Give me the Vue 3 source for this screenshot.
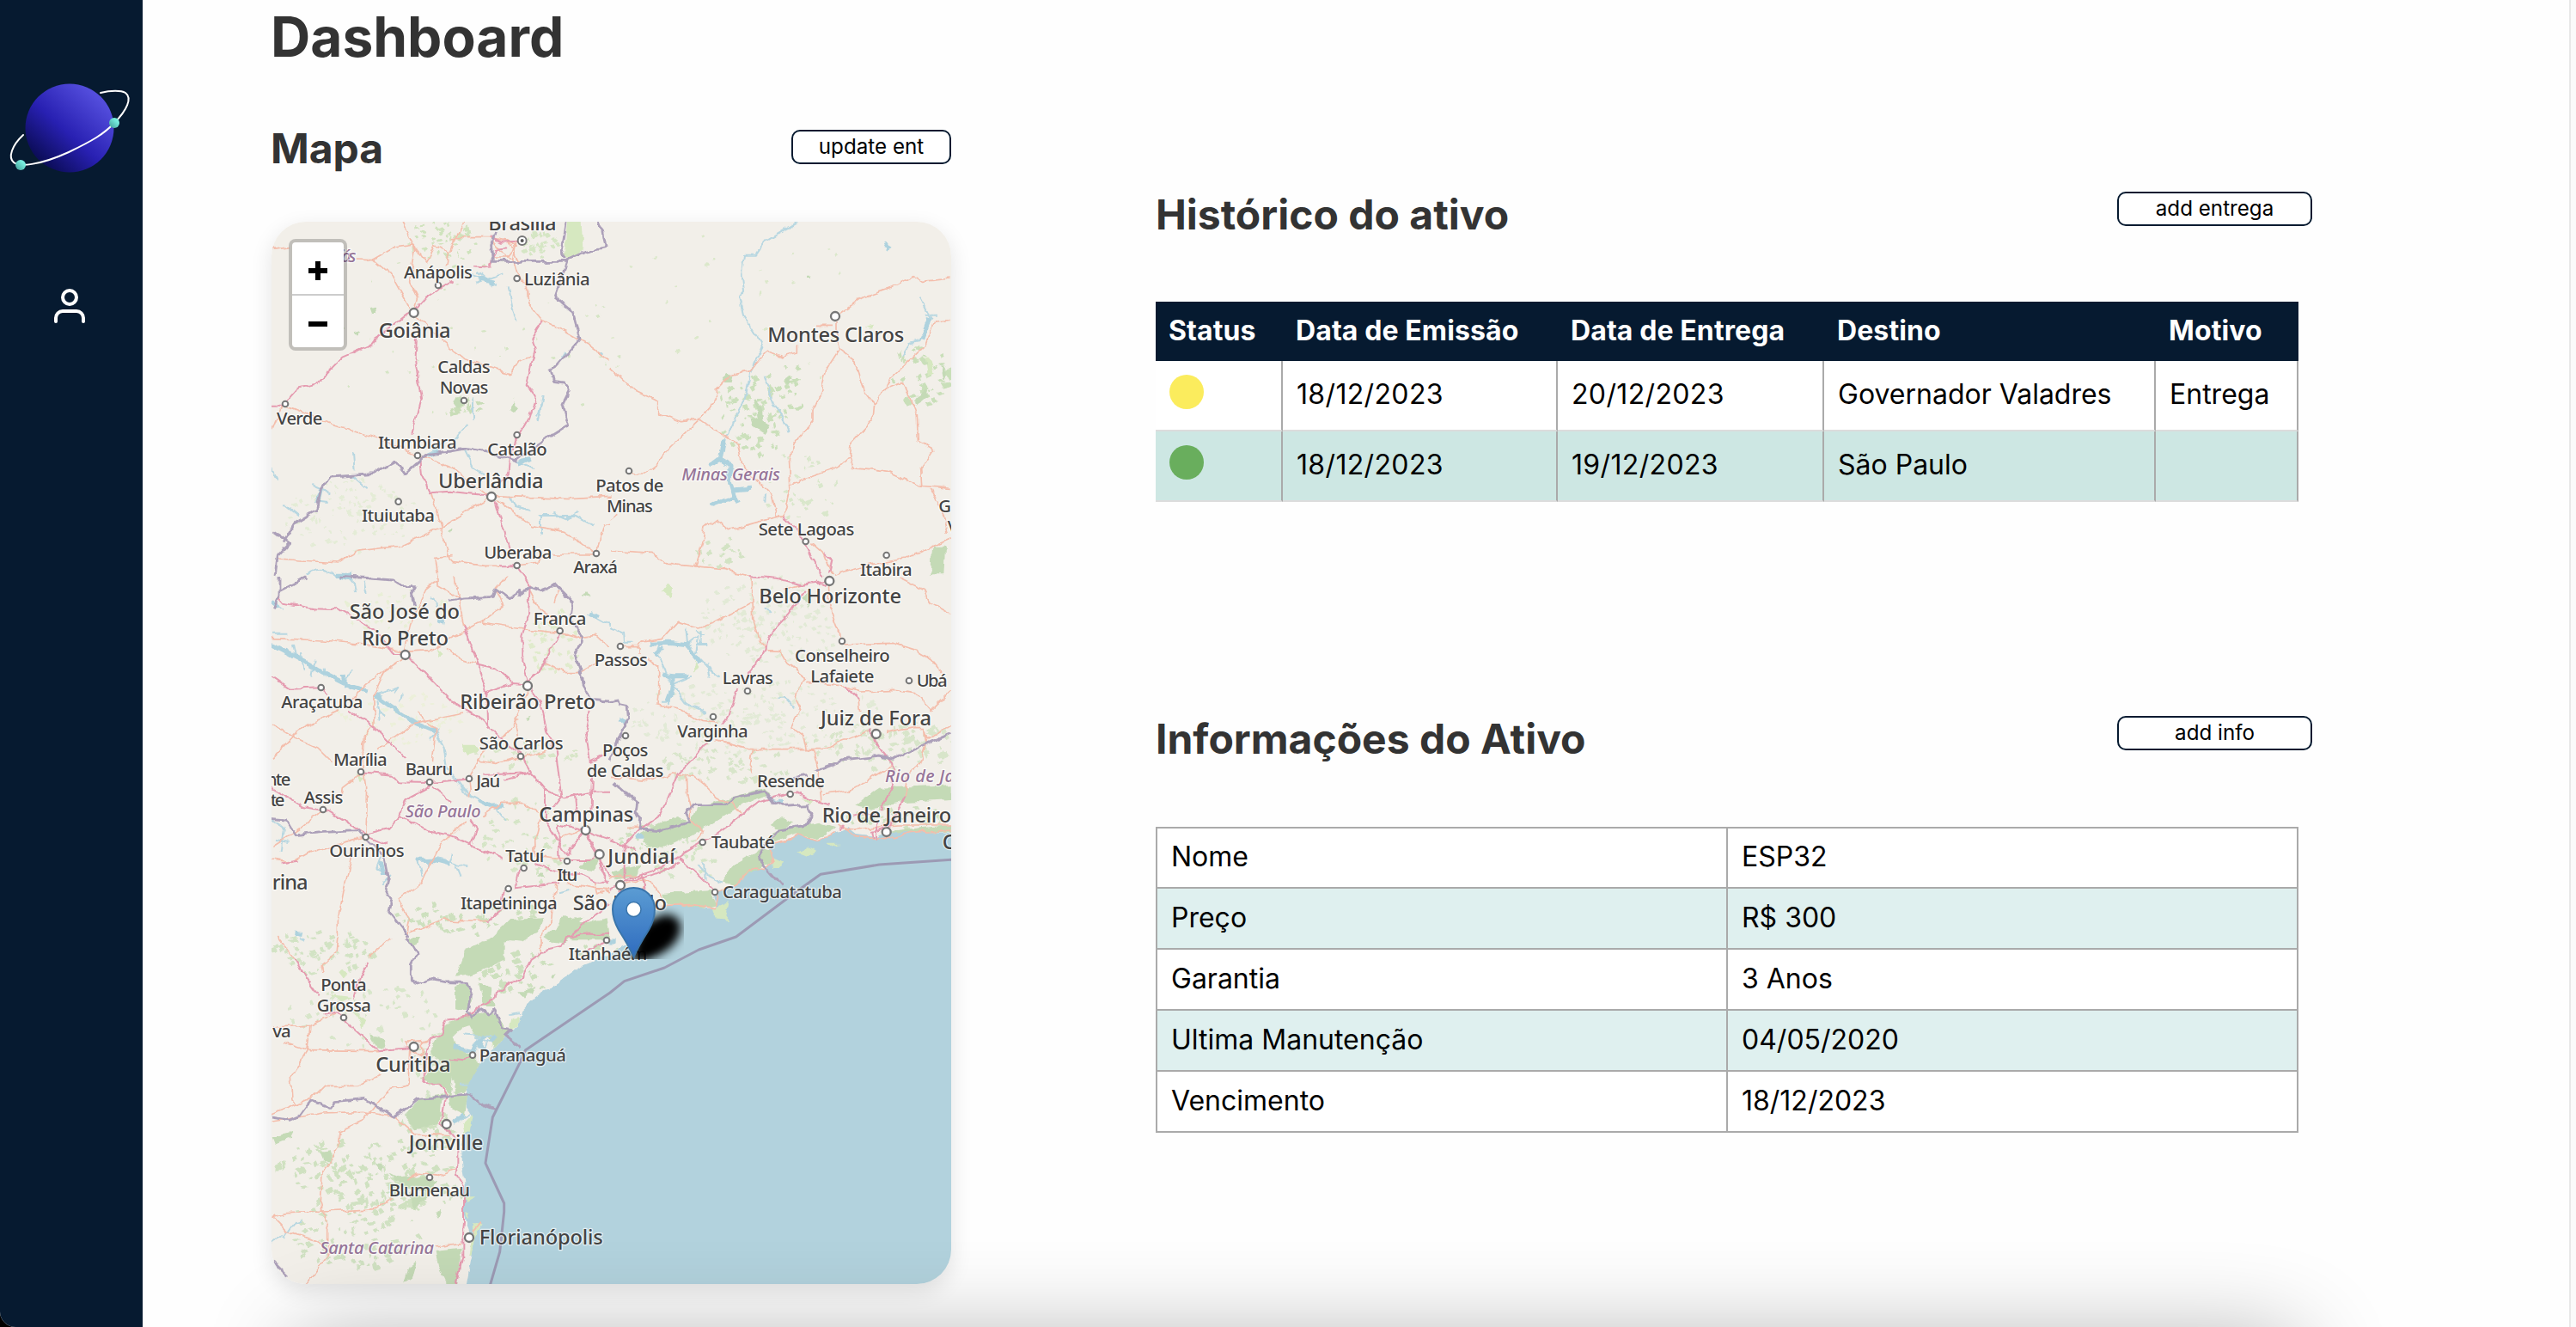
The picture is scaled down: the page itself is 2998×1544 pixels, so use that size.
<script setup>
const deliveries = [
  { status: 'pending', issued: '18/12/2023', due: '20/12/2023', target: 'Governador Valadres', reason: 'Entrega' },
  { status: 'done', issued: '18/12/2023', due: '19/12/2023', target: 'São Paulo', reason: '' },
]

const info = [
  ['Nome', 'ESP32'],
  ['Preço', 'R$ 300'],
  ['Garantia', '3 Anos'],
  ['Ultima Manutenção', '04/05/2020'],
  ['Vencimento', '18/12/2023'],
]

// Each map tile keeps its own local coordinates.
// cities: [x, y, radius]; labels: [text, x, baseline, length, kind]
const tiles = [
  {
    x: 0, y: 0,
    park: 'M1050 20H1100L1105 115L1080 150L1040 150Z',
    forest: 'M655 655L665 635L690 665L672 678ZM850 680L868 658L885 680L865 690ZM365 325L380 320L385 345L372 345ZM305 412L328 405L315 422ZM630 1105L650 1100L645 1115Z',
    river: 'M845 250L860 330L875 370M720 210L810 240M730 240L820 205M740 200L790 245M965 630L950 720M958 660L945 700M720 640L720 710M700 735L660 780L560 830M300 830L305 895M160 945L220 970M170 1000L215 1005M300 910L350 955M870 860L930 885M690 820L720 880L760 905M850 980L870 1020L920 1035M950 1050L1080 1050L1145 1085M960 1050V1115M1000 1040L1050 1060L1090 1030M18 880L40 925M60 1010L110 1050M140 1258Q190 1220 240 1255L300 1250M1020 520L1045 480M1160 480H1175',
    lake: 'M560 838L600 822M880 868L920 850M740 225L800 235M190 960L180 1000M240 1255H300',
    trunk: 'M470 20L520 120L500 230L530 290L520 330M18 118L80 110M320 153L370 155L430 205L500 330M370 155L440 115L515 105L560 165L590 110L635 130L625 180M700 20L655 90L640 130M650 80L780 80L870 95L860 150L875 200L910 250L915 310L965 370L1050 410L1120 450L1200 510M520 345L600 430L690 500L850 555L880 510L925 495M66 665L200 720L390 780L520 835L640 875L780 985M575 970L610 1090L633 1190L650 1210L760 1225L820 1225M780 985L610 1090L470 1155L310 1175L250 1215L40 1200M800 980L900 985L1060 992L1200 985M805 995L930 1085L1040 1105L1150 1180M650 1190L590 1195L600 1260M1000 1185H1150L1180 1080L1200 1075M18 760L55 665M790 90L840 150L870 110L845 90L880 160M790 150H860M875 1224L950 1215L960 1190',
    motorway: 'M66 655L110 605L175 590L265 497L370 452L390 425L490 350L515 340L560 285L650 230M720 178L780 182L800 120L845 115M780 75L820 95L880 92M525 430L520 510L543 640L508 770M18 668L60 668M965 370L928 430L938 470L908 595L938 635L915 710L870 790L848 860L845 900L800 960M535 850L540 905L570 970L640 965L780 980M800 1000L848 1160M815 1225L875 1225L900 1260',
    border: 'M18 1100L80 1145L40 1190L30 1260M60 1145L100 1075L175 1030L190 960L225 915L370 905L450 862L480 905L560 835L640 825L700 815L770 828L870 860L950 800L1055 735L1035 660L1060 610L1040 585L1000 580L990 540L1010 530L1095 435L1070 340L1010 290L1055 155L1110 130L1185 115L1175 55L1150 20M1045 155L1030 120L1045 20M1050 163H790L785 100L800 60',
    cities: [[600, 246, 11], [875, 222, 11], [515, 342, 16], [66, 660, 11], [690, 648, 11], [875, 768, 11], [528, 840, 11], [786, 984, 16], [461, 1001, 11], [1152, 1182, 11], [875, 1224, 11]],
    labels: [['Brasília', 775, 52, 238, 'big'], ['iás', 255, 165, 58, 'state'], ['Anápolis', 480, 220, 240], ['Luziânia', 900, 244, 230], ['Goiânia', 392, 428, 252, 'big'], ['Caldas', 598, 551, 184], ['Novas', 605, 624, 170], ['Verde', 36, 731, 160], ['Itumbiara', 390, 815, 275], ['Catalão', 772, 840, 208], ['Uberlândia', 600, 953, 368, 'big'], ['Ituiutaba', 333, 1070, 255], ['Uberaba', 760, 1200, 237], ['Araxá', 1072, 1250, 155], ['Patos de', 1150, 964, 237], ['Minas', 1188, 1037, 162]],
  },
  {
    x: 1200, y: 0,
    forest: 'M388 575L405 552L430 560L425 585L400 585ZM505 640L530 670L535 720L560 735L540 765L500 740L490 710L515 705ZM615 570L635 560L630 590L618 590ZM1125 1160H1170L1165 1258H1120ZM1155 520L1175 550L1165 575ZM1065 650L1100 600L1105 635L1070 665ZM690 215H705V222H690Z',
    park: 'M1100 500L1115 500L1130 550L1110 565ZM890 385L915 380L910 395Z',
    river: 'M655 25L540 95L510 140H468L460 200L468 270L450 290L465 350L535 460L490 550L470 650L440 700L415 770L390 800M350 1015L440 985M1085 290L1120 360L1080 440L1045 450L1020 490M1100 350L1140 350M540 560L570 660L600 700L620 760M540 975L538 1010',
    lake: 'M400 785L385 850L345 880M430 960L495 955M385 855L420 875L418 930L430 970L448 1010M430 985L350 1015M1085 440L1115 360M960 98L970 115',
    trunk: 'M1190 222L1090 232L1060 212L980 255L880 290L800 345M795 370V450L800 470L755 540L735 620L708 680V720L640 800L628 850L632 940L605 1050M800 470L855 510L890 620L920 660L960 610L1020 585L1050 640L1072 700L1075 790L1130 820L1085 890L1088 945M920 660L915 720L840 800L835 840L850 880L970 895L1080 945L1190 955M840 840L800 880L630 940M1190 370L1130 375L1100 460L1040 515L980 570L955 615M720 385H780M655 450V480L600 495L550 472L490 545L420 560L370 610V650L310 715L210 810L170 865L125 900L60 900M0 535L85 615L170 655V690L250 722L310 712L380 760L445 800L465 880L565 980L580 1050H605L560 1060L415 1100L370 1060L330 1090L325 1140L298 1230M0 1170L140 1180L210 1220L400 1235L485 1258M1118 955L1165 1050L1180 1110M1190 1130L1030 1200L860 1230L780 1258M700 1145L750 1190L775 1255M0 1065L25 1045',
    motorway: 'M605 1050L650 1095L680 1150L740 1260M750 1185L775 1205L765 1250',
    border: '',
    cities: [[786, 354, 16], [66, 894, 11], [683, 1140, 11], [965, 1188, 11]],
    labels: [['Montes Claros', 550, 442, 477, 'big'], ['Minas Gerais', 250, 926, 344, 'state'], ['Sete Lagoas', 518, 1119, 335], ['Itabira', 873, 1258, 182], ['Governador', 1147, 1037, 330], ['Valadares', 1178, 1108, 270]],
  },
  {
    x: 0, y: 1260,
    forest: 'M800 1270L860 1240L900 1210L965 1195L950 1240L890 1280ZM985 1270L1040 1185L1100 1215L1190 1195L1200 1270ZM1090 1020L1125 985L1160 990L1150 1030L1110 1025ZM1100 65L1120 58L1130 75ZM945 1045L960 1035L975 1055ZM900 495L920 488L910 505Z',
    park: 'M680 590L730 590L745 610L700 625ZM310 690L345 700L330 718ZM590 255L620 270L600 285Z',
    river: 'M380 415L460 390L445 410M385 430L395 500M90 240L100 285M160 350L170 290M120 270L130 330M200 320L205 355M300 330L270 380M420 490L390 470M470 440L480 410M600 540L570 570M590 545L620 600L630 670L700 760L800 810L840 860M520 990L600 985L700 1015M530 990L545 1050M570 985V1015M660 1000L680 1050M640 1000L650 970M18 850L60 880L50 960M30 920L80 930M400 980L385 1020L430 1040L400 1080M1120 130L1200 175M1140 120L1150 150M20 200H70M300 5L310 60M340 20L350 60M18 90L60 120M1020 1105L1060 1095M570 80L600 105',
    lake: 'M18 240L150 310L200 340L300 390L350 405M380 415L450 465L520 515L590 545M270 345L280 390M740 785L780 805L830 800M525 990L590 992L640 1005M400 1000L410 1040M18 90L40 110M100 1245L125 1250M250 0L300 10M1130 130L1160 145M600 160L620 165',
    trunk: 'M18 218L200 225L350 240L485 265L570 260L690 195L750 162L825 105L800 45L840 0M750 165L850 180L1025 200L1080 215L1150 205L1200 250M600 0V35L670 75L690 180M490 280L415 330L375 420V520L340 560L335 680M415 330L345 380L305 430M18 640L110 540L250 470M18 520L100 565L180 600L230 650M390 605L510 515L690 480M530 475L590 540L580 650M630 250L670 290L740 310M970 300L1040 335L1100 335L1150 300M915 400L870 500L880 560M880 500L820 565M740 645L800 655L890 635L980 610M760 610L705 710L710 770M330 690L265 740L260 770M345 690L350 740L345 900M200 815L120 880L20 945M750 840L820 790L890 790L950 825M960 835L938 920L940 980L1045 990M700 850L605 945L540 1070L460 1130L500 1200L490 1260M300 970L270 1100L250 1200V1258M500 1245L620 1200L770 1205M1010 1080L995 1200L960 1258M480 265L500 170L560 45L600 15M920 50L950 110L1000 150M1020 915L1110 885M1150 1070L1160 1110L1200 1090M1050 1075L1120 1085L1200 1100M18 990L90 1000L150 965L345 910M660 0L670 75M1005 95L1020 50',
    motorway: 'M40 70L60 95L170 115L250 118L380 190L440 270H485L640 430L750 500L830 580L890 625M18 350L80 392L190 388L215 410M290 470L380 530L490 640M330 685L440 695L460 718L570 720L700 710M760 695L925 687M830 710L925 687M570 735L485 780L465 840L430 878L345 900M575 735L650 795M465 840L570 890L640 905L715 940L830 990M715 850L735 885L715 940M345 900L220 820L130 805L18 740M50 1003L110 995M900 0L920 35L915 140L892 210V300L912 370L950 340L1025 200M690 175L740 310L768 410L860 375L912 380M730 310L800 325L860 372M768 410L772 530M925 400L955 440L975 540L1010 610L1030 770L1000 810M1130 470L1115 540L1130 650L1180 625M890 630L925 690L975 750L1040 775L1140 755H1200M1140 700L1135 830M975 750V860L1045 970M1110 890L1045 975M1045 990L1130 990L1160 970M1105 890L1140 950L1200 1050M1115 900L1160 970L1175 1040L1195 1080M1025 1000L1020 865L1110 890L1200 920M1020 1075L870 1090L880 1040L900 1020M940 1005L1010 1030L1100 1045L1150 1070H1200M830 1100L820 1165L770 1210M350 910L420 940M1040 775L1080 765L1085 830M1200 1140L1130 1200L1060 1260',
    border: 'M45 0V70L25 115M45 55L140 5M250 0L440 15L470 35H520L505 60L515 100M630 85L690 75L790 70L800 45L850 80L890 55L890 70L920 35L960 50L1010 30L1070 90L1060 160L1105 210L1100 235L1075 270L1095 330L1105 380L1130 430L1200 435M18 850L70 855L100 905L200 895L320 890L345 920L410 980L425 1050L415 1090L435 1130L425 1170L495 1258',
    cities: [[1025, 192, 11], [485, 276, 16], [912, 384, 16], [191, 390, 11], [888, 630, 11], [330, 684, 11], [570, 720, 11], [708, 708, 11], [198, 816, 11], [347, 912, 11], [1115, 888, 16], [1163, 972, 16], [1050, 996, 11], [899, 1020, 11], [845, 1092, 11]],
    labels: [['São José do', 290, 150, 385, 'big'], ['Rio Preto', 333, 243, 303, 'big'], ['Franca', 932, 171, 185], ['Ribeirão Preto', 676, 465, 474, 'big'], ['Araçatuba', 52, 461, 285], ['São Carlos', 743, 604, 294], ['Marília', 234, 662, 188], ['Bauru', 485, 695, 167], ['Jaú', 733, 737, 84], ['nte', 0, 731, 85], ['te', 14, 802, 50], ['Assis', 131, 795, 137], ['São Paulo', 485, 843, 264, 'state'], ['Campinas', 952, 858, 330, 'big'], ['Ourinhos', 220, 981, 262], ['Tatuí', 835, 998, 135], ['Itu', 1015, 1063, 72], ['rina', 20, 1095, 126, 'big'], ['Itapetininga', 678, 1163, 338], ['São Paulo', 1070, 1165, 328, 'big'], ['Passos', 1145, 315, 187], ['Poços', 1173, 628, 160], ['de Caldas', 1118, 702, 269]],
  },
  {
    x: 1200, y: 1260,
    forest: 'M105 900L180 860L230 840L280 860L300 810L430 770L540 740L560 765L480 790L350 870L180 950L130 940ZM390 1070L440 1000L530 950L560 960L570 1000L520 1020L430 1080ZM180 1110L350 1095L375 1150L330 1160L200 1145ZM570 890L680 870L730 860L790 880L720 920L650 900L570 930L540 930ZM850 800L940 740L1190 730V780L1020 790L900 810ZM560 870L600 840L640 860L600 890ZM0 1030L110 1010L90 1050L20 1060ZM670 80L690 50L695 110ZM970 890L1190 870V890L1000 895Z',
    park: 'M360 1160L410 1140L400 1180L415 1200L370 1195ZM655 965L690 948L720 965L690 980ZM565 985L600 1000L590 1020L570 1020ZM755 935L800 935L770 945ZM200 20L220 40L215 80L180 50ZM295 295L312 320L290 335ZM670 775L715 780L700 800Z',
    river: 'M265 185L270 240L310 210L300 270M320 190V240M180 230L165 270L215 380L200 450M215 380L285 350M215 380L260 440L340 480M285 260L340 320L380 350M0 180L45 200L48 230L80 230M585 425L610 425L640 460M310 1010L340 1045L390 1070M330 1000L335 1060M540 110L560 135M560 780L600 800M210 440L180 440M300 190L330 205M340 240L300 240M340 310L350 350',
    lake: 'M135 238L200 235L270 242L285 265L310 300M190 250L160 275M180 345L220 350L215 400L200 440M35 500L55 515M215 350L270 350M585 790H600M95 910H115',
    trunk: 'M495 0L500 150L520 220L545 260L595 262L620 305L685 360L650 400L645 430L665 470L635 530L675 560L685 605L710 610L725 670L735 790M500 90L360 165L310 180L235 160L180 220L110 232L100 245H40M105 245V270M130 290L170 320V380L165 450L240 465L320 505L380 510M370 575L480 605H740L820 575L905 540M500 605L490 660L500 690M760 30L765 110L800 200L805 240L990 235L1070 260L1120 290L1160 340M690 370L820 385L870 405L990 400L1070 410L1120 470L1190 400M870 430L875 480M960 550L1060 530L1100 530L1110 570L1190 520M1100 530L1105 580L1080 660L1040 700L1030 770M1190 135L1120 95L1100 50L1010 5M0 700L150 715L220 690L290 700L340 740L385 785L430 790L455 835M265 700L268 760L280 810V850L320 890L300 930M740 765L850 745L985 660M800 870L850 910L960 920L1050 895L1190 885M120 880H60M570 935L630 920L655 900L690 915L720 925L790 895M560 960L570 1000L540 1025L500 1020L440 1075L380 1100L370 1160L290 1148L180 1150M40 1080L120 1060L110 1110M0 1050L90 1045L150 1075L180 1120M60 1070L30 1040L0 1060M600 50L680 25M820 890L900 880L1000 870L1190 870',
    motorway: 'M680 50L630 130L550 215L540 265L480 345M445 390L415 490L390 520M340 580L290 640L240 690L180 830L110 880L50 940L50 1060M485 0L580 8L660 30L760 20M720 15L750 35M820 385L870 430M905 530L940 600L985 655L990 730L950 800V820M770 800L700 780L650 755L520 790L440 850L355 910L230 985L180 1020L60 1060L0 1095M240 985L310 1045L365 1100M0 925L60 945L90 960M1030 770L1010 810L975 880L915 890L920 915M850 835L930 830M810 870L800 890M240 1000L210 1020L150 1045L50 1070M110 1045L120 1100M30 1100L60 1140M930 860L930 920',
    border: 'M0 440L30 435L35 455L60 460L65 500L40 540L20 600L0 640M10 720L60 765L95 790L90 830L110 850L105 885L170 890L280 860L265 830L290 800L400 800L430 775L540 750L570 790L600 805L690 800L705 830L685 870L580 890L545 935L515 985L600 1085M720 680L810 645L940 630L990 640L1190 550M640 700L690 695',
    cities: [[766, 18, 16], [36, 246, 11], [810, 228, 11], [1044, 366, 11], [480, 402, 11], [360, 492, 11], [54, 558, 11], [929, 552, 16], [629, 762, 11], [965, 894, 16], [323, 930, 11], [36, 1080, 16], [366, 1104, 11]],
    labels: [['Belo Horizonte', 520, 95, 497, 'big'], ['Lavras', 392, 376, 178], ['Conselheiro', 645, 299, 332], ['Lafaiete', 700, 372, 222], ['Ubá', 1070, 387, 108], ['Juiz de Fora', 735, 520, 387, 'big'], ['Varginha', 235, 563, 247], ['Resende', 513, 738, 237], ['Rio de Janeiro', 960, 718, 388, 'state'], ['Rio de Janeiro', 740, 860, 452, 'big'], ['Taubaté', 353, 950, 222], ['Jundiaí', -8, 1005, 235, 'big'], ['Caraguatatuba', 393, 1125, 417], ['Cabo Frio', 1160, 952, 300, 'big']],
  },
  {
    x: 0, y: 2520,
    forest: 'M660 140L700 40L780 10L850 -60L970 -65L900 0L830 20V80L720 130ZM660 170L710 160L720 230L700 260L660 250ZM570 400L610 330L640 295L720 270L790 260L850 330L800 390L770 350L730 350L710 310L680 320L650 350L660 380L720 420L745 440L700 540L660 550L650 490L640 555L610 520L550 500L560 470L640 450L580 420ZM740 160L780 180L800 240L760 240ZM480 620L540 560L615 550L605 650L520 670ZM630 550L700 555L690 620L650 600ZM590 1095L680 1085L670 1212H630L600 1150ZM360 340L415 360L410 390L385 385ZM430 820L470 840L520 835L600 850L560 890L470 870ZM880 190L920 190L900 215ZM970 0L1040 -60L1110 -70L1040 25L1000 20ZM495 0H540L530 20L510 30ZM905 190L940 170L930 200ZM990 140L1010 125L1000 150ZM480 1210L500 1150L525 1130L510 1190ZM590 960L610 950L600 985ZM500 910L560 910L515 950ZM190 750L225 745L230 790L205 785ZM380 790L415 800L400 820ZM20 700L100 680L90 700L30 725Z',
    park: 'M860 285L885 280L880 310L850 325ZM250 120L265 110L280 125L265 140ZM690 650L720 620L710 680L690 690ZM720 1000L755 1000L730 1040L715 1110L705 1110L720 1050ZM700 960L715 965L705 990ZM215 200L300 210L270 225ZM780 350L800 340L790 390ZM690 910L730 910L700 930ZM310 260L345 290L335 320Z',
    river: 'M690 340L800 350M730 350L780 370M740 340V390M770 360L760 390M660 650L710 620M675 518H710M90 1000L120 990M60 1050L100 990M18 1065L60 1040M850 270L885 265M115 0L130 15',
    lake: 'M650 385L720 400L730 375L760 345M650 650L690 620M780 370L800 345M740 370L760 400M1195 15H1220',
    trunk: 'M40 0L100 80M255 0L250 50L190 100L195 130M435 0L360 70M18 315L150 310L240 270M60 365L150 395L390 398M150 310L140 400L85 490L90 570L105 585M18 620L160 560L200 520L320 520L400 480M500 395L495 515L430 530L380 590L340 640L255 680L250 740L195 830L190 930L215 1020V1110L140 1212M20 645L200 615L340 610L450 630L520 690L640 695M20 980L70 965L200 960L290 955L380 950L440 910M20 980L70 1030L180 1060L215 1110M490 850L530 825L600 835L665 812M590 1080L680 1070M720 1030L750 995M540 370L580 360M490 370L540 365L545 420L505 400ZM960 0V50',
    motorway: 'M100 80L130 130L185 205M355 90L325 140L305 215M200 275L245 265L270 290L390 397L500 388M550 510L605 512L628 555L610 650L670 720V800L665 830L690 870V1000L685 1060V1120L665 1212M550 510L555 400L580 355L610 340L628 290L705 280L740 245L800 215L805 190L890 140L920 80L965 50L1030 35L1045 5L1110 -10L1200 -10M640 425L690 430L720 415M1120 55L1180 20',
    border: 'M490 0L525 60L505 100V155L530 165L580 150L620 158L700 160L720 180L705 270L715 285L745 250L780 270L795 250L825 320L855 325L835 345L890 390M18 630L80 640L115 625L155 570L225 595L240 575L340 565L440 628L480 605L530 565L600 560L690 550L800 600M20 1130L75 1185',
    cities: [[270, 282, 11], [515, 384, 16], [720, 413, 11], [629, 654, 16], [570, 840, 11], [708, 1050, 16], [1188, 12, 11]],
    labels: [['Ponta', 190, 187, 160], ['Grossa', 176, 259, 190], ['va', 22, 351, 64], ['Curitiba', 382, 470, 262, 'big'], ['Paranaguá', 743, 433, 304], ['Joinville', 497, 744, 260, 'big'], ['Blumenau', 428, 906, 283], ['Florianópolis', 743, 1073, 432, 'big'], ['Santa Catarina', 187, 1105, 398, 'state'], ['Itanhaém', 1055, 80, 275]],
  },
]

const sea =
  'M2400 2153L2200 2148L2130 2172L2060 2163L2030 2140L2000 2155L1970 2165L1920 2185L1890 2175L1855 2160L1830 2180L1770 2195L1755 2220L1770 2260L1740 2285L1700 2280L1660 2320L1640 2335L1580 2360L1565 2370L1575 2420L1530 2420L1490 2405L1380 2412L1345 2450L1300 2530L1200 2580L1110 2615L1020 2680L940 2730L890 2780L880 2830L850 2850L800 2910L750 2950L720 3010L700 3060L695 3110L715 3145L700 3200L680 3240L685 3320L695 3380L690 3470L700 3530L720 3580L715 3630L695 3740H2400Z'

const maritime =
  'M2400 2250L2140 2268L1935 2302L1840 2370L1640 2520L1510 2565L1390 2628L1250 2675L1200 2715L905 2915L885 2960L790 3150L765 3310L830 3450L830 3480L815 3620L780 3740'

// Scattered vegetation: [cx, cy, rx, ry, count, size, colour]
const scatter = [
  [600, 100, 130, 80, 45, 8, '#cfe3bd'], [940, 110, 80, 50, 35, 8, '#d5e6c4'], [300, 1050, 240, 130, 110, 7, '#e4ecd6'],
  [700, 420, 600, 350, 45, 6, '#d5e5c4'], [690, 670, 60, 40, 14, 9, '#c9ddb8'], [1700, 700, 130, 150, 60, 10, '#cbe0bb'],
  [1830, 600, 60, 80, 14, 10, '#c9dfb9'], [2270, 560, 110, 120, 40, 11, '#c9dfb9'], [1850, 950, 150, 130, 30, 8, '#d9e7cb'],
  [1650, 350, 550, 300, 30, 6, '#dbe8ca'], [1570, 1180, 90, 60, 18, 10, '#d3e3c4'], [1750, 1420, 250, 160, 150, 8, '#e2ead6'],
  [1700, 1750, 450, 130, 220, 8, '#e2ead6'], [2150, 1850, 250, 90, 90, 10, '#d8e5ca'], [1600, 1920, 250, 60, 60, 9, '#d8e5ca'],
  [450, 1380, 200, 80, 50, 8, '#e8efd6'], [450, 1750, 220, 100, 60, 8, '#ecf0da'], [1000, 1500, 90, 130, 40, 9, '#e0ebcc'],
  [900, 1880, 180, 50, 30, 8, '#d8e6c8'], [930, 2180, 180, 160, 45, 9, '#d5e5c6'], [700, 2450, 260, 60, 50, 11, '#cde0be'],
  [180, 2570, 180, 80, 60, 10, '#d2e3c4'], [350, 2800, 300, 110, 55, 9, '#d8e6ca'], [260, 3330, 240, 100, 80, 11, '#cfe1c0'],
  [540, 3200, 110, 90, 55, 12, '#cfe1c0'], [540, 3390, 150, 90, 60, 12, '#cfe1c0'], [290, 3550, 240, 140, 90, 11, '#d0e1c2'],
  [850, 2640, 150, 80, 30, 12, '#cde0be'], [590, 2980, 90, 110, 40, 11, '#d5e5c8'], [1300, 2170, 90, 50, 25, 9, '#cfe1c0'],
  [1470, 2230, 160, 90, 30, 9, '#d5e5c8'], [1150, 2560, 90, 30, 8, 9, '#cde0be'], [2200, 2100, 180, 40, 35, 10, '#cfe1c0'],
]

let seed = 7
const rand = () => {
  seed = (seed * 16807) % 2147483647
  return seed / 2147483647
}
const vegetation = scatter.map(([cx, cy, rx, ry, count, size, fill]) => {
  let d = ''
  for (let i = 0; i < count; i++) {
    const a = rand() * Math.PI * 2
    const r = Math.pow(rand(), 0.6)
    const x = Math.round(cx + Math.cos(a) * r * rx)
    const y = Math.round(cy + Math.sin(a) * r * ry)
    const w = Math.round(size * (0.5 + rand() * 1.5))
    const h = Math.round(size * (0.5 + rand() * 1.2))
    d += `M${x} ${y}l${w} ${-Math.round(h / 2)}l${Math.round(w / 2)} ${h}l${-w} ${Math.round(h / 2)}z`
  }
  return { d, fill }
})

const at = (t) => `translate(${t.x} ${t.y})`
const sizes = { big: 71, state: 60 }
</script>

<template>
  <div class="page">
    <aside class="sidebar">
      <svg class="logo" viewBox="0 0 166 120">
        <defs>
          <linearGradient id="planet" x1="0.82" y1="0.16" x2="0.18" y2="0.86">
            <stop offset="0" stop-color="#534ddc" />
            <stop offset="0.55" stop-color="#2820b2" />
            <stop offset="1" stop-color="#0c0d5a" />
          </linearGradient>
          <linearGradient id="moon" x1="1" y1="0" x2="0" y2="1">
            <stop offset="0.3" stop-color="#76ebdd" />
            <stop offset="1" stop-color="#3f9c95" />
          </linearGradient>
        </defs>
        <circle cx="81" cy="59" r="51.5" fill="url(#planet)" />
        <path class="orbit" d="M27 67C14 79 9 93 16 99C22 104 45 103 80 87C107 74 121 66 133 53C148 38 154 24 146 18C141 15 129 15 117 18" />
        <circle cx="24" cy="102" r="6" fill="url(#moon)" />
        <circle cx="133" cy="53" r="6" fill="url(#moon)" />
      </svg>
      <svg class="user" viewBox="0 0 48 48">
        <circle cx="24" cy="14" r="8" />
        <path d="M8 42v-4a8 8 0 0 1 8-8h16a8 8 0 0 1 8 8v4" />
      </svg>
    </aside>

    <main class="content">
      <section class="left">
        <h1>Dashboard</h1>
        <header class="map-head">
          <h2>Mapa</h2>
          <button class="btn btn-map">update ent</button>
        </header>
        <div class="map">
          <svg class="map-canvas" viewBox="18 24 2373 3708" preserveAspectRatio="none">
            <defs>
              <filter id="rough" filterUnits="userSpaceOnUse" x="0" y="0" width="2420" height="3760">
                <feTurbulence type="fractalNoise" baseFrequency="0.022" numOctaves="3" seed="4" />
                <feDisplacementMap in="SourceGraphic" scale="24" xChannelSelector="R" yChannelSelector="G" />
              </filter>
            </defs>
            <rect width="2420" height="3760" fill="#f2efe9" />
            <g filter="url(#rough)">
              <path v-for="(v, i) in vegetation" :key="i" :d="v.d" :fill="v.fill" />
              <path :d="sea" class="sea" />
              <g v-for="t in tiles" :key="'v' + t.x + t.y" :transform="at(t)">
                <path :d="t.park" class="park" />
                <path :d="t.forest" class="forest" />
                <path :d="t.river" class="line river" />
                <path :d="t.lake" class="line lake" />
              </g>
              <g v-for="t in tiles" :key="'r' + t.x + t.y" :transform="at(t)">
                <path :d="t.trunk" class="line trunk" />
                <path :d="t.motorway" class="line motorway" />
                <path :d="t.border" class="line border" />
              </g>
            </g>
            <path :d="maritime" class="line maritime" />
            <g v-for="t in tiles" :key="'c' + t.x + t.y" :transform="at(t)">
              <circle v-for="(c, i) in t.cities" :key="i" :cx="c[0]" :cy="c[1]" :r="c[2] - 1" class="city" :stroke-width="c[2] > 12 ? 7 : 6" />
            </g>
            <circle cx="893" cy="90" r="15" class="city capital" />
            <circle cx="893" cy="90" r="6" fill="#555" />
            <g v-for="t in tiles" :key="'l' + t.x + t.y" :transform="at(t)">
              <text
                v-for="(l, i) in t.labels"
                :key="i"
                :x="l[1]"
                :y="l[2] + 1"
                :textLength="l[3]"
                :font-size="sizes[l[4]] || 61"
                :class="['label', l[4]]"
              >{{ l[0] }}</text>
            </g>
          </svg>
          <svg class="marker" viewBox="0 0 84 84">
            <defs>
              <linearGradient id="pin" x1="0" y1="0" x2="0" y2="1">
                <stop offset="0" stop-color="#5b9cd3" />
                <stop offset="1" stop-color="#2f6cbf" />
              </linearGradient>
              <filter id="soft" x="-40%" y="-40%" width="180%" height="180%">
                <feGaussianBlur stdDeviation="5.500" />
              </filter>
            </defs>
            <path d="M24 88C30 58 44 34 62 32C80 31 86 48 74 64C63 78 44 84 24 88Z" fill="#000" filter="url(#soft)" />
            <path d="M26 82L44 42L60 48C60 62 52 76 26 82Z" fill="#000" filter="url(#soft)" />
            <path d="M25.500 81.500C21 71 15 61 8 50C3.500 42 1 34 1 26C1 11.500 12 1 25.500 1S50 11.500 50 26C50 34 47.500 42 43 50C36 61 30 71 25.500 81.500Z" fill="url(#pin)" stroke="#3a75ab" stroke-width="2" />
            <circle cx="25.500" cy="26" r="8.500" fill="#fff" stroke="#3a75ab" stroke-width="1.500" />
          </svg>
          <div class="zoom">
            <span class="zoom-btn">
              <svg viewBox="0 0 24 24"><path d="M9 1h6v8h8v6h-8v8H9v-8H1V9h8z" /></svg>
            </span>
            <span class="zoom-btn">
              <svg viewBox="0 0 24 24"><path d="M1 9h22v6H1z" /></svg>
            </span>
          </div>
        </div>
      </section>

      <section class="right">
        <header class="panel-head">
          <h2>Histórico do ativo</h2>
          <button class="btn">add entrega</button>
        </header>
        <table class="history">
          <colgroup>
            <col class="c1" /><col class="c2" /><col class="c3" /><col class="c4" /><col class="c5" />
          </colgroup>
          <thead>
            <tr>
              <th>Status</th>
              <th>Data de Emissão</th>
              <th>Data de Entrega</th>
              <th>Destino</th>
              <th>Motivo</th>
            </tr>
          </thead>
          <tbody>
            <tr v-for="(d, i) in deliveries" :key="i">
              <td><span class="dot" :class="d.status"></span></td>
              <td class="date">{{ d.issued }}</td>
              <td class="date">{{ d.due }}</td>
              <td>{{ d.target }}</td>
              <td>{{ d.reason }}</td>
            </tr>
          </tbody>
        </table>
        <header class="panel-head second">
          <h2>Informações do Ativo</h2>
          <button class="btn">add info</button>
        </header>
        <table class="info">
          <tbody>
            <tr v-for="row in info" :key="row[0]">
              <td>{{ row[0] }}</td>
              <td>{{ row[1] }}</td>
            </tr>
          </tbody>
        </table>
      </section>
    </main>
    <div class="gutter"></div>
    <div class="sheet"></div>
  </div>
</template>

<style>
body {
  overflow: hidden;
  background: #000;
}
</style>

<style scoped>
.page {
  position: relative;
  display: flex;
  height: 1544px;
  overflow: hidden;
  border-bottom-left-radius: 18px;
  background: #fefefe;
  color: #000;
  font-family: Inter, "Liberation Sans", sans-serif;
}

.sidebar {
  box-sizing: border-box;
  display: flex;
  flex: 0 0 166px;
  flex-direction: column;
  align-items: center;
  padding-top: 90px;
  background: #061a30;
}

.logo {
  width: 166px;
  height: 120px;
}

.orbit {
  fill: none;
  stroke: #fff;
  stroke-width: 2;
  stroke-linecap: round;
}

.user {
  width: 48px;
  height: 48px;
  margin: 122px 4px 0 0;
  fill: none;
  stroke: #fff;
  stroke-width: 4;
  stroke-linecap: round;
}

.content {
  display: flex;
  flex: 1;
  align-items: flex-start;
  padding-left: 150px;
}

.left {
  position: relative;
  width: 791px;
}

.left::before {
  position: absolute;
  top: 258px;
  left: 0;
  width: 791px;
  height: 1236px;
  border-radius: 40px;
  box-shadow: 0 8px 26px rgba(0, 0, 0, 0.11);
  content: "";
}

h1,
h2 {
  margin: 0;
  color: #333;
  font-weight: 700;
}

h1 {
  margin-left: -1px;
  padding-top: 4px;
  font-size: 64px;
  line-height: 78px;
}

h2 {
  padding-top: 1px;
  font-size: 48px;
  line-height: 58px;
}

.map-head {
  display: flex;
  align-items: flex-start;
  justify-content: space-between;
  height: 115px;
  margin-top: 61px;
}

.map-head h2 {
  margin-left: -1px;
}

.btn {
  box-sizing: border-box;
  width: 227px;
  height: 40px;
  margin-top: 3px;
  padding: 0;
  border: 2px solid #061a30;
  border-radius: 10px;
  background: #fff;
  color: #000;
  font: 400 24.2px/36px Inter, "Liberation Sans", sans-serif;
}

.btn-map {
  width: 186px;
  margin-top: 8px;
}

.map {
  position: relative;
  height: 1236px;
  overflow: hidden;
  border-radius: 40px;
}

.map-canvas {
  display: block;
  width: 791px;
  height: 1236px;
}

.sea {
  fill: #b2d2dd;
}

.forest {
  fill: #c4dab6;
}

.park {
  fill: #d6e8c0;
}

.line {
  fill: none;
  stroke-linejoin: round;
}

.river {
  stroke: #b8d7e1;
  stroke-width: 6;
}

.lake {
  stroke: #aed2de;
  stroke-width: 15;
}

.trunk {
  stroke: #f4bdab;
  stroke-width: 5;
}

.motorway {
  stroke: #e59bb0;
  stroke-width: 6;
}

.border {
  stroke: #aca0b9;
  stroke-width: 8.5;
}

.maritime {
  stroke: #9c9ab4;
  stroke-width: 9;
}

.city {
  fill: #fff;
  stroke: #777;
}

.capital {
  stroke-width: 6;
}

.label {
  fill: #444;
  stroke: rgba(255, 255, 255, 0.65);
  stroke-width: 8;
  stroke-linejoin: round;
  paint-order: stroke;
  font-family: "Noto Sans", sans-serif;
  font-weight: 500;
}

.label.state {
  fill: #967599;
  font-style: italic;
}

.marker {
  position: absolute;
  top: 774px;
  left: 396px;
  width: 84px;
  height: 84px;
}

.zoom {
  position: absolute;
  top: 20px;
  left: 20px;
  width: 60px;
  border: 4px solid rgba(0, 0, 0, 0.2);
  border-radius: 8px;
  background: #fff;
  background-clip: padding-box;
}

.zoom-btn {
  display: flex;
  align-items: center;
  justify-content: center;
  height: 60px;
}

.zoom-btn + .zoom-btn {
  border-top: 2px solid #ccc;
}

.zoom-btn svg {
  width: 24px;
  height: 24px;
  margin-top: 5px;
}

.right {
  width: 1346px;
  margin-left: 238px;
  padding-top: 220px;
}

.panel-head {
  display: flex;
  align-items: flex-start;
  justify-content: space-between;
  height: 131px;
}

.panel-head.second {
  height: 132px;
  margin-top: 246px;
}

table {
  border-spacing: 0;
  table-layout: fixed;
  width: 1330px;
  font-size: 32px;
  line-height: 38px;
}

th,
td {
  box-sizing: border-box;
  padding: 0;
  text-align: left;
}

.c1 { width: 148px; }
.c2 { width: 320px; }
.c3 { width: 310px; }
.c4 { width: 386px; }
.c5 { width: 166px; }

.history th {
  height: 69px;
  padding: 0 0 2px 15px;
  background: #061a30;
  color: #fff;
  font-weight: 700;
  letter-spacing: 0.1px;
}

.history td {
  height: 82px;
  padding: 0 0 2px 16px;
  border-right: 2px solid #aaa;
  border-bottom: 2px solid #dcdcdc;
  background: #fff;
}

.history tr:nth-child(2) td {
  background: #cde7e3;
}

.history .date {
  letter-spacing: 0.35px;
}

.dot {
  display: block;
  width: 40px;
  height: 40px;
  margin-top: -6px;
  border-radius: 50%;
}

.pending {
  background: #fbec5d;
}

.done {
  background: #69ae5d;
}

.info {
  border-top: 2px solid #aaa;
  border-left: 2px solid #aaa;
}

.info td {
  height: 71px;
  padding: 0 0 2px 16px;
  border-right: 2px solid #aaa;
  border-bottom: 2px solid #aaa;
  background: #fff;
}

.info tr:first-child td {
  height: 70px;
}

.info tr:nth-child(even) td {
  background: #dff0ef;
}

.gutter {
  box-sizing: border-box;
  width: 8px;
  border-left: 2px solid #e8e8e8;
  background: #fafafa;
}

.sheet {
  position: absolute;
  top: 1556px;
  left: 345px;
  width: 2330px;
  height: 200px;
  border-radius: 20px;
  box-shadow: 0 0 106px rgba(0, 0, 0, 0.3);
}
</style>
